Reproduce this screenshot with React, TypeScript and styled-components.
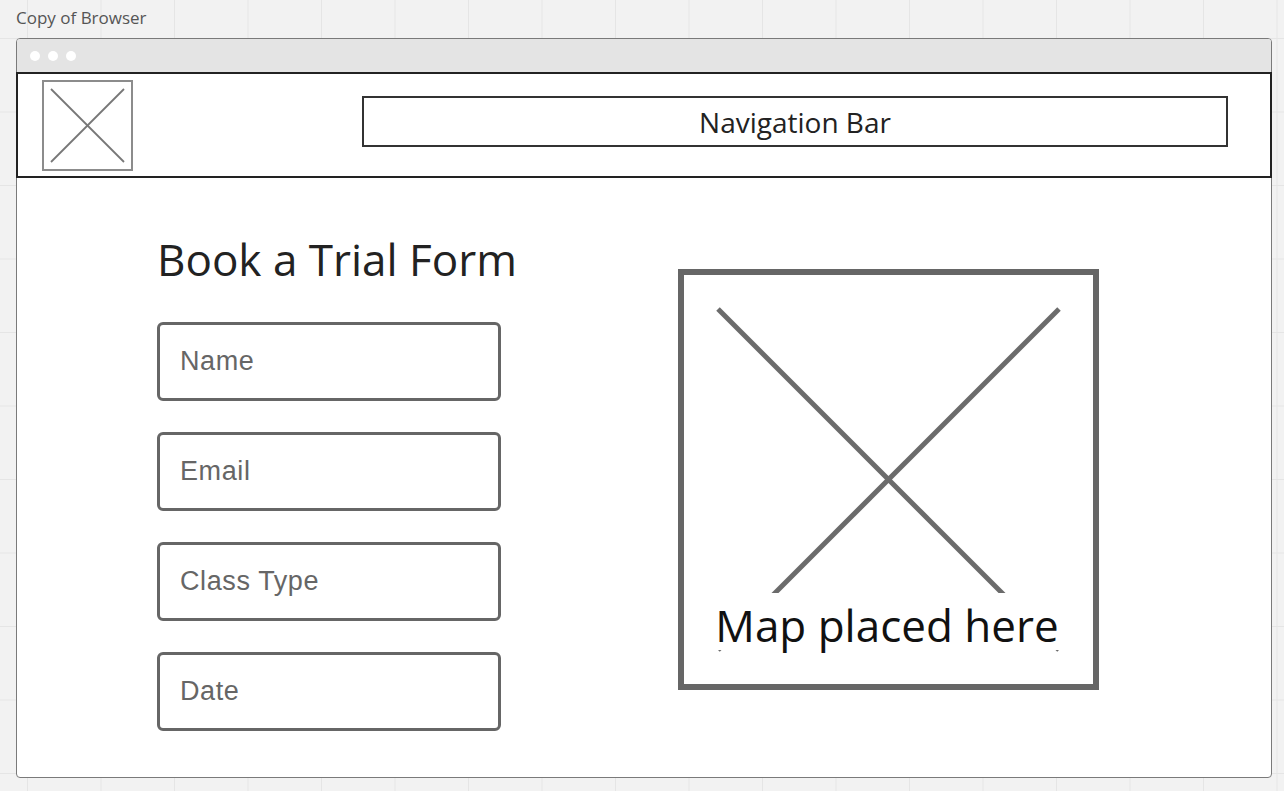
import React from "react";
import styled, { createGlobalStyle } from "styled-components";

const GlobalStyle = createGlobalStyle`
  html, body {
    margin: 0;
    padding: 0;
  }
  body {
    width: 1284px;
    height: 791px;
    overflow: hidden;
    font-family: "Open Sans", "Noto Sans", sans-serif;
  }
`;

const Canvas = styled.div`
  width: 1284px;
  height: 791px;
  background-color: #f2f2f2;
  background-image:
    linear-gradient(to right, #e5e5e5 1px, transparent 1px),
    linear-gradient(to bottom, #e5e5e5 1px, transparent 1px);
  background-size: 73.5px 73.5px;
  background-position: 27px 38px;
  padding: 6px 0 0 16px;
  box-sizing: border-box;
`;

const FrameLabel = styled.div`
  font-size: 17px;
  line-height: 24px;
  color: #555;
  height: 32px;
`;

const Frame = styled.div`
  width: 1256px;
  height: 740px;
  box-sizing: border-box;
  border: 1px solid #7a7a7a;
  border-radius: 4px;
  background: #fff;
  display: flex;
  flex-direction: column;
`;

const TitleBar = styled.div`
  height: 33px;
  background: #e4e4e4;
  border-radius: 3px 3px 0 0;
  display: flex;
  align-items: center;
  gap: 8px;
  padding-left: 13px;
`;

const Dot = styled.span`
  width: 10px;
  height: 10px;
  border-radius: 50%;
  background: #fff;
`;

const Header = styled.header`
  height: 106px;
  margin: 0 -1px;
  box-sizing: border-box;
  border: 2px solid #222;
  display: flex;
  align-items: flex-start;
  padding: 6px 42px 0 24px;
`;

const Logo = styled.div`
  width: 91px;
  height: 91px;
  box-sizing: border-box;
  border: 2px solid #8c8c8c;
  display: flex;
  align-items: center;
  justify-content: center;
`;

const NavBar = styled.nav`
  margin-left: auto;
  margin-top: 16px;
  width: 866px;
  height: 51px;
  box-sizing: border-box;
  border: 2px solid #333;
  display: flex;
  align-items: center;
  justify-content: center;
  font-size: 28px;
  color: #222;
`;

const Content = styled.main`
  flex: 1;
  display: flex;
  align-items: flex-start;
  padding-left: 140px;
  gap: 177px;
`;

const FormColumn = styled.section`
  width: 344px;
  display: flex;
  flex-direction: column;
  gap: 31px;
`;

const Heading = styled.h1`
  margin: 58px 0 9px;
  font-size: 44px;
  line-height: 46px;
  font-weight: 400;
  color: #222;
  white-space: nowrap;
`;

const Field = styled.div`
  height: 79px;
  box-sizing: border-box;
  border: 3px solid #666;
  border-radius: 6px;
  display: flex;
  align-items: center;
  padding-left: 20px;
  font-family: "Liberation Sans", Arial, sans-serif;
  font-size: 27px;
  letter-spacing: 0.6px;
  color: #666;
`;

const MapBox = styled.div`
  position: relative;
  margin-top: 91px;
  width: 421px;
  height: 421px;
  box-sizing: border-box;
  border: 6px solid #666;
`;

const MapCross = styled.svg`
  display: block;
  width: 100%;
  height: 100%;
`;

const MapLabel = styled.div`
  position: absolute;
  left: 29px;
  top: 318px;
  width: 348px;
  height: 57px;
  padding-top: 6px;
  box-sizing: border-box;
  background: #fff;
  display: flex;
  align-items: center;
  justify-content: center;
  font-size: 44px;
  color: #111;
  white-space: nowrap;
`;

const fields = ["Name", "Email", "Class Type", "Date"];

export default function App() {
  return (
    <>
      <GlobalStyle />
      <Canvas>
        <FrameLabel>Copy of Browser</FrameLabel>
        <Frame>
          <TitleBar>
            <Dot />
            <Dot />
            <Dot />
          </TitleBar>
          <Header>
            <Logo>
              <svg width="87" height="87" viewBox="0 0 87 87">
                <line x1="7" y1="7" x2="80" y2="80" stroke="#777" strokeWidth="1.8" />
                <line x1="80" y1="7" x2="7" y2="80" stroke="#777" strokeWidth="1.8" />
              </svg>
            </Logo>
            <NavBar>Navigation Bar</NavBar>
          </Header>
          <Content>
            <FormColumn>
              <Heading>Book a Trial Form</Heading>
              {fields.map((f) => (
                <Field key={f}>{f}</Field>
              ))}
            </FormColumn>
            <MapBox>
              <MapCross viewBox="0 0 409 409">
                <line x1="34" y1="34" x2="375" y2="375" stroke="#6b6b6b" strokeWidth="5" />
                <line x1="375" y1="34" x2="34" y2="375" stroke="#6b6b6b" strokeWidth="5" />
              </MapCross>
              <MapLabel>Map placed here</MapLabel>
            </MapBox>
          </Content>
        </Frame>
      </Canvas>
    </>
  );
}
